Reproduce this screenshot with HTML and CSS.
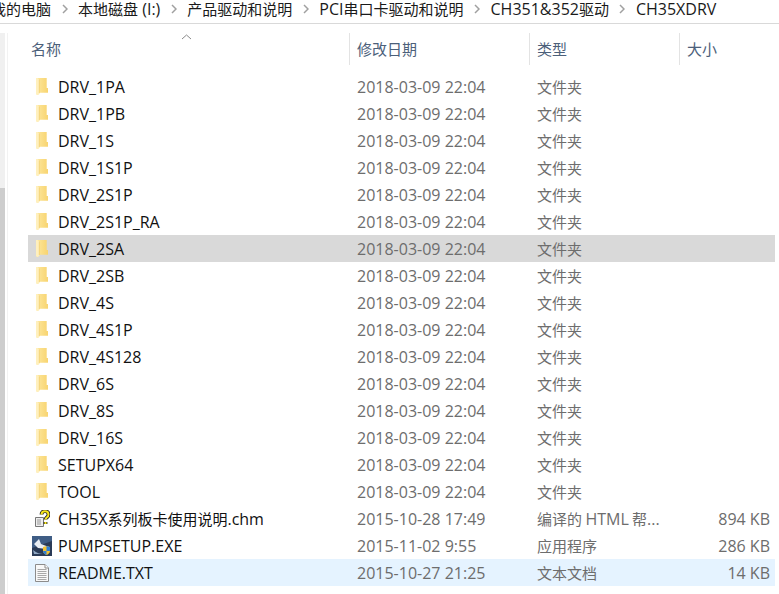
FILE: index.html
```html
<!DOCTYPE html>
<html lang="zh">
<head>
<meta charset="utf-8">
<title>CH35XDRV</title>
<link rel="stylesheet" href="styles.css">
</head>
<body>
<svg class="defs" width="0" height="0">
  <defs>
    <linearGradient id="fg" x1="0" y1="0" x2="1" y2="0">
      <stop offset="0" stop-color="#fdeaa8"/>
      <stop offset="0.4" stop-color="#fbe08c"/>
      <stop offset="1" stop-color="#f8d470"/>
    </linearGradient>
    <symbol id="chev" viewBox="0 0 6 10"><path d="M1 1l4 4-4 4" fill="none" stroke="#a0a0a0" stroke-width="1.500"/></symbol>
    <symbol id="folder" viewBox="0 0 12 17">
      <path d="M0 0h10.700v10H12v4.700H3.300V16l-2 1L0 16z" fill="url(#fg)"/>
      <path d="M0 0h1.500l1.800 1.500V16l-2 1L0 16z" fill="#fff0bd"/>
      <path d="M3.300 1.500V15" stroke="#eec65e" stroke-width=".6" fill="none"/>
    </symbol>
  </defs>
</svg>
<nav class="crumbs">
  <span class="cjk">我的电脑</span><span class="sep"><svg width="6" height="10"><use href="#chev"/></svg></span>
  <span><span class="cjk">本地磁盘</span> (I:)</span><span class="sep"><svg width="6" height="10"><use href="#chev"/></svg></span>
  <span class="cjk">产品驱动和说明</span><span class="sep"><svg width="6" height="10"><use href="#chev"/></svg></span>
  <span>PCI<span class="cjk">串口卡驱动和说明</span></span><span class="sep"><svg width="6" height="10"><use href="#chev"/></svg></span>
  <span>CH351&amp;352<span class="cjk">驱动</span></span><span class="sep"><svg width="6" height="10"><use href="#chev"/></svg></span>
  <span>CH35XDRV</span>
</nav>
<main class="pane">
  <div class="rail"></div>
  <div class="list">
    <div class="head">
      <div class="hcell c-name">名称<svg class="sort" width="11" height="6" viewBox="0 0 11 6"><path d="M1 5l4.500-4 4.500 4" fill="none" stroke="#8a8a8a"/></svg></div>
      <div class="hcell c-date">修改日期</div>
      <div class="hcell c-type">类型</div>
      <div class="hcell c-size">大小</div>
    </div>
    <div class="rows">
      <div class="row"><div class="name"><span class="ico"><svg width="12" height="17"><use href="#folder"/></svg></span>DRV_1PA</div><div class="date">2018-03-09 22:04</div><div class="type">文件夹</div><div class="size"></div></div>
      <div class="row"><div class="name"><span class="ico"><svg width="12" height="17"><use href="#folder"/></svg></span>DRV_1PB</div><div class="date">2018-03-09 22:04</div><div class="type">文件夹</div><div class="size"></div></div>
      <div class="row"><div class="name"><span class="ico"><svg width="12" height="17"><use href="#folder"/></svg></span>DRV_1S</div><div class="date">2018-03-09 22:04</div><div class="type">文件夹</div><div class="size"></div></div>
      <div class="row"><div class="name"><span class="ico"><svg width="12" height="17"><use href="#folder"/></svg></span>DRV_1S1P</div><div class="date">2018-03-09 22:04</div><div class="type">文件夹</div><div class="size"></div></div>
      <div class="row"><div class="name"><span class="ico"><svg width="12" height="17"><use href="#folder"/></svg></span>DRV_2S1P</div><div class="date">2018-03-09 22:04</div><div class="type">文件夹</div><div class="size"></div></div>
      <div class="row"><div class="name"><span class="ico"><svg width="12" height="17"><use href="#folder"/></svg></span>DRV_2S1P_RA</div><div class="date">2018-03-09 22:04</div><div class="type">文件夹</div><div class="size"></div></div>
      <div class="row sel"><div class="name"><span class="ico"><svg width="12" height="17"><use href="#folder"/></svg></span>DRV_2SA</div><div class="date">2018-03-09 22:04</div><div class="type">文件夹</div><div class="size"></div></div>
      <div class="row"><div class="name"><span class="ico"><svg width="12" height="17"><use href="#folder"/></svg></span>DRV_2SB</div><div class="date">2018-03-09 22:04</div><div class="type">文件夹</div><div class="size"></div></div>
      <div class="row"><div class="name"><span class="ico"><svg width="12" height="17"><use href="#folder"/></svg></span>DRV_4S</div><div class="date">2018-03-09 22:04</div><div class="type">文件夹</div><div class="size"></div></div>
      <div class="row"><div class="name"><span class="ico"><svg width="12" height="17"><use href="#folder"/></svg></span>DRV_4S1P</div><div class="date">2018-03-09 22:04</div><div class="type">文件夹</div><div class="size"></div></div>
      <div class="row"><div class="name"><span class="ico"><svg width="12" height="17"><use href="#folder"/></svg></span>DRV_4S128</div><div class="date">2018-03-09 22:04</div><div class="type">文件夹</div><div class="size"></div></div>
      <div class="row"><div class="name"><span class="ico"><svg width="12" height="17"><use href="#folder"/></svg></span>DRV_6S</div><div class="date">2018-03-09 22:04</div><div class="type">文件夹</div><div class="size"></div></div>
      <div class="row"><div class="name"><span class="ico"><svg width="12" height="17"><use href="#folder"/></svg></span>DRV_8S</div><div class="date">2018-03-09 22:04</div><div class="type">文件夹</div><div class="size"></div></div>
      <div class="row"><div class="name"><span class="ico"><svg width="12" height="17"><use href="#folder"/></svg></span>DRV_16S</div><div class="date">2018-03-09 22:04</div><div class="type">文件夹</div><div class="size"></div></div>
      <div class="row"><div class="name"><span class="ico"><svg width="12" height="17"><use href="#folder"/></svg></span>SETUPX64</div><div class="date">2018-03-09 22:04</div><div class="type">文件夹</div><div class="size"></div></div>
      <div class="row"><div class="name"><span class="ico"><svg width="12" height="17"><use href="#folder"/></svg></span>TOOL</div><div class="date">2018-03-09 22:04</div><div class="type">文件夹</div><div class="size"></div></div>
      <div class="row"><div class="name"><span class="ico"><svg width="16" height="17" viewBox="0 0 16 17"><path d="M1.500 7.500h8v9h-8z" fill="#eee" stroke="#777"/><path d="M3 10h4M3 12h4M3 14h4" stroke="#999"/><path d="M7.500 4.500c0-4.500 7-4.500 7 0 0 3-3 3-3 5M11.500 12v2" fill="none" stroke="#222" stroke-width="3.800"/><path d="M7.500 4.500c0-4.500 7-4.500 7 0 0 3-3 3-3 5M11.500 12v2" fill="none" stroke="#f8e61c" stroke-width="2"/></svg></span>CH35X<span class="cjk">系列板卡使用说明</span>.chm</div><div class="date">2015-10-28 17:49</div><div class="type">编译的 <span class="lat">HTML</span> 帮<span class="lat">...</span></div><div class="size">894 KB</div></div>
      <div class="row"><div class="name"><span class="ico"><svg width="20" height="20" viewBox="0 0 20 20"><rect width="20" height="20" fill="#2a3b57"/><path d="M0 0h20v5L0 12z" fill="#3f5d85"/><path d="M2 8l5-5 2 5 8 3-2 2-9-1z" fill="#e9eef4"/><path d="M1 14c4 3 7 4 10 4H2z" fill="#8ea6c2"/><path d="M11 11l3.500-1 3.500 1v4c0 2-2 3.500-3.500 4-1.500-.5-3.500-2-3.500-4z" fill="#f2c233"/><path d="M14.500 10l3.500 1v4h-3.500zM11 15h3.500v4c-1.500-.5-3.500-2-3.500-4z" fill="#2f7fd6"/></svg></span>PUMPSETUP.EXE</div><div class="date">2015-11-02 9:55</div><div class="type">应用程序</div><div class="size">286 KB</div></div>
      <div class="row hov"><div class="name"><span class="ico"><svg width="14" height="18" viewBox="0 0 14 18"><path d="M.5.500h9.500l3.500 3.500v13.500H.5z" fill="#f8f8f8" stroke="#8c8c8c"/><path d="M10 .500V4h3.500" fill="#fff" stroke="#8c8c8c"/><path d="M2.500 5.500h9M2.500 7.500h9M2.500 9.500h9M2.500 11.500h9M2.500 13.500h9M2.500 15.500h9" stroke="#a8a8a8"/></svg></span>README.TXT</div><div class="date">2015-10-27 21:25</div><div class="type">文本文档</div><div class="size">14 KB</div></div>
    </div>
  </div>
</main>
</body>
</html>
```
FILE: styles.css
```css
* { box-sizing: border-box; }
html, body { margin: 0; padding: 0; }
body {
  width: 779px;
  height: 594px;
  overflow: hidden;
  background: #fff;
  font-family: "Open Sans", "Noto Sans CJK SC", sans-serif;
  font-size: 16px;
}
.defs { position: absolute; }
.cjk { font-family: "Noto Sans CJK SC", sans-serif; font-size: 15px; }
.lat { font-family: "Open Sans", sans-serif; font-size: 16px; }
.crumbs {
  height: 24px;
  border-bottom: 1px solid #d9d9d9;
  display: flex;
  align-items: flex-start;
  white-space: nowrap;
  line-height: 18px;
  color: #1a1a1a;
}
.crumbs > :first-child { margin-left: -9px; }
.sep { width: 27px; height: 18px; display: flex; justify-content: center; align-items: center; flex: none; }
.sep svg { display: block; }
.pane { display: flex; height: 570px; }
.rail {
  width: 8px;
  margin-top: 9px;
  flex: none;
  border-right: 1px solid #f2f2f2;
  background: linear-gradient(#f0f0f0 0 155px, #cdcdcd 155px) 0 0 / 5px 100% no-repeat;
}
.list { margin-left: 20px; width: 747px; }
.head { display: flex; height: 32px; margin-top: 9px; }
.hcell {
  color: #4c607a;
  font-family: "Noto Sans CJK SC", sans-serif;
  font-size: 15px;
  display: flex;
  align-items: center;
  position: relative;
  border-right: 1px solid #e3e3e3;
  padding-bottom: 2px;
  flex: none;
}
.c-name { width: 322px; padding-left: 3px; }
.c-date { width: 180px; padding-left: 7px; }
.c-type { width: 150px; padding-left: 7px; }
.c-size { width: 95px; padding-left: 7px; border-right: 0; }
.sort { position: absolute; left: 153px; top: 1px; }
.rows { margin-top: 8px; }
.row {
  display: flex;
  height: 27px;
  align-items: center;
  color: #6d6d6d;
  white-space: nowrap;
}
.row.sel { background: #d9d9d9; }
.row.hov { background: #e5f3ff; }
.row .name { width: 322px; display: flex; align-items: center; color: #111; flex: none; }
.row .ico { width: 30px; height: 20px; display: flex; justify-content: center; align-items: center; flex: none; padding-right: 2px; }
.row .date { width: 180px; padding-left: 7px; flex: none; }
.row .type { width: 150px; padding-left: 7px; flex: none; font-family: "Noto Sans CJK SC", sans-serif; font-size: 15px; }
.row .size { width: 90px; text-align: right; flex: none; }
```
